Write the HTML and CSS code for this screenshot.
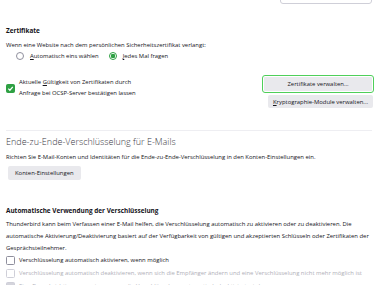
FILE: index.html
```html
<!DOCTYPE html>
<html lang="de">
<head>
    <meta charset="UTF-8">
    <title>Einstellungen</title>
    <link rel="stylesheet" href="styles.css">
</head>
<body>
    <div class="topbar">
        <div class="search">
            <svg viewBox="0 0 8 8" width="6" height="6"><circle cx="3.3" cy="3.3" r="2.3" fill="none" stroke="#a0a0aa" stroke-width="0.9"/><path d="M5 5 L7.2 7.2" stroke="#a0a0aa" stroke-width="0.9"/></svg>
            <span>In Einstellungen suchen</span>
        </div>
    </div>

    <section class="group">
        <h4>Zertifikate</h4>
        <p>Wenn eine Website nach dem persönlichen Sicherheitszertifikat verlangt:</p>
        <div class="radios">
            <label class="radio"><span class="dot"></span><span><u>A</u>utomatisch eins wählen</span></label>
            <label class="radio"><span class="dot on"></span><span><u>J</u>edes Mal fragen</span></label>
        </div>
        <div class="cert-row">
            <label class="check">
                <span class="box on">
                    <svg viewBox="0 0 8 8" width="8" height="8"><path d="M1.5 4.2 L3.3 6 L6.6 2.2" fill="none" stroke="#fff" stroke-width="1.4"/></svg>
                </span>
                <span>Aktuelle <u>G</u>ültigkeit von Zertifikaten durch<br>Anfrage bei OCSP-Server bestätigen lassen</span>
            </label>
            <div class="btn-col">
                <button class="btn focus">Zertifikate verwalten...</button>
                <button class="btn"><u>K</u>ryptographie-Module verwalten...</button>
            </div>
        </div>
    </section>

    <hr class="sep">

    <section class="group">
        <h2>Ende-zu-Ende-Verschlüsselung für E-Mails</h2>
        <p>Richten Sie E-Mail-Konten und Identitäten für die Ende-zu-Ende-Verschlüsselung in den Konten-Einstellungen ein.</p>
        <button class="btn">Konten-Einstellungen</button>

        <h4 class="auto">Automatische Verwendung der Verschlüsselung</h4>
        <p class="text">Thunderbird kann beim Verfassen einer E-Mail helfen, die Verschlüsselung automatisch zu aktivieren oder zu deaktivieren. Die automatische Aktivierung/Deaktivierung basiert auf der Verfügbarkeit von gültigen und akzeptierten Schlüsseln oder Zertifikaten der Gesprächsteilnehmer.</p>
        <label class="check line"><span class="box"></span><span>Verschlüsselung automatisch aktivieren, wenn möglich</span></label>
        <label class="check line off"><span class="box"></span><span>Verschlüsselung automatisch deaktivieren, wenn sich die Empfänger ändern und eine Verschlüsselung nicht mehr möglich ist</span></label>
        <label class="check line off"><span class="box filled"></span><span>Eine Benachrichtigung anzeigen, wenn die Verschlüsselung automatisch deaktiviert wird</span></label>
    </section>
</body>
</html>
```

FILE: styles.css
```css
body {
    margin: 0;
    padding: 0 8px 0 6px;
    font-family: "Open Sans", sans-serif;
    font-size: 5.9px;
    color: #15141a;
    background: #fff;
    overflow: hidden;
}
u {
    text-decoration: underline;
}
.topbar {
    display: flex;
    justify-content: flex-end;
    margin-top: -10px;
}
.search {
    width: 92px;
    height: 14px;
    border: 1px solid #cfcfd8;
    border-radius: 3px;
    display: flex;
    align-items: center;
    gap: 4px;
    padding-left: 5px;
    box-sizing: border-box;
    color: #b8b8c0;
    white-space: nowrap;
    overflow: hidden;
}
.group h4 {
    margin: 22px 0 4px;
    font-size: 6.4px;
    font-weight: 700;
}
.group p {
    margin: 0;
    line-height: 12px;
}
.radios {
    display: flex;
    gap: 10px;
    padding-left: 10px;
    margin-top: 1px;
}
.radio {
    display: flex;
    align-items: center;
    gap: 6px;
}
.dot {
    width: 6px;
    height: 6px;
    border: 1px solid #8f8f9d;
    border-radius: 50%;
    box-sizing: content-box;
    display: inline-block;
}
.dot.on {
    border-color: #2ea043;
    background: radial-gradient(circle, #2ea043 0 2px, #fff 2.5px);
}
.cert-row {
    display: flex;
    justify-content: space-between;
    align-items: flex-start;
    margin-top: 16px;
}
.check {
    display: flex;
    align-items: center;
    gap: 4px;
    line-height: 11px;
    margin-top: 1px;
}
.box {
    width: 7px;
    height: 7px;
    border: 1px solid #8f8f9d;
    border-radius: 1.5px;
    display: inline-flex;
    align-items: center;
    justify-content: center;
    flex: none;
}
.box.on {
    background: #2ea043;
    border-color: #2ea043;
}
.box svg {
    width: 7px;
    height: 7px;
}
.btn-col {
    display: flex;
    flex-direction: column;
    align-items: flex-end;
    gap: 3px;
    margin-right: -1px;
}
.btn {
    font-family: inherit;
    font-size: 5.9px;
    color: #15141a;
    background: #e9e9ed;
    border: none;
    border-radius: 2px;
    padding: 0 7px;
    height: 13px;
    margin: 0;
}
.btn-col .btn:last-child {
    padding: 0 5px;
}
.btn.focus {
    width: 110px;
    height: 16px;
    outline: 1.5px solid #4fcf5a;
    outline-offset: 0;
    border: 1px solid #fff;
    background: #e9e9ed;
}
.sep {
    border: none;
    border-top: 1px solid #eeeef2;
    margin: 22px 0 0;
}
.group h2 {
    margin: 5px 0 3px;
    font-size: 9px;
    line-height: 12px;
    font-weight: 300;
    color: #3a3944;
}
.group > .btn {
    margin: 3px 0 0 2px;
    height: 14px;
}
.group h4.auto {
    margin: 26px 0 3px;
}
.text {
    line-height: 12px;
}
.line {
    margin-top: 0;
    line-height: 13px;
}
.group .text + .line {
    margin-top: 0;
}
.off {
    color: #b0afb8;
}
.off .box {
    border-color: #cfcfd8;
}
.box.filled {
    background: #d4d4dc;
}
```
